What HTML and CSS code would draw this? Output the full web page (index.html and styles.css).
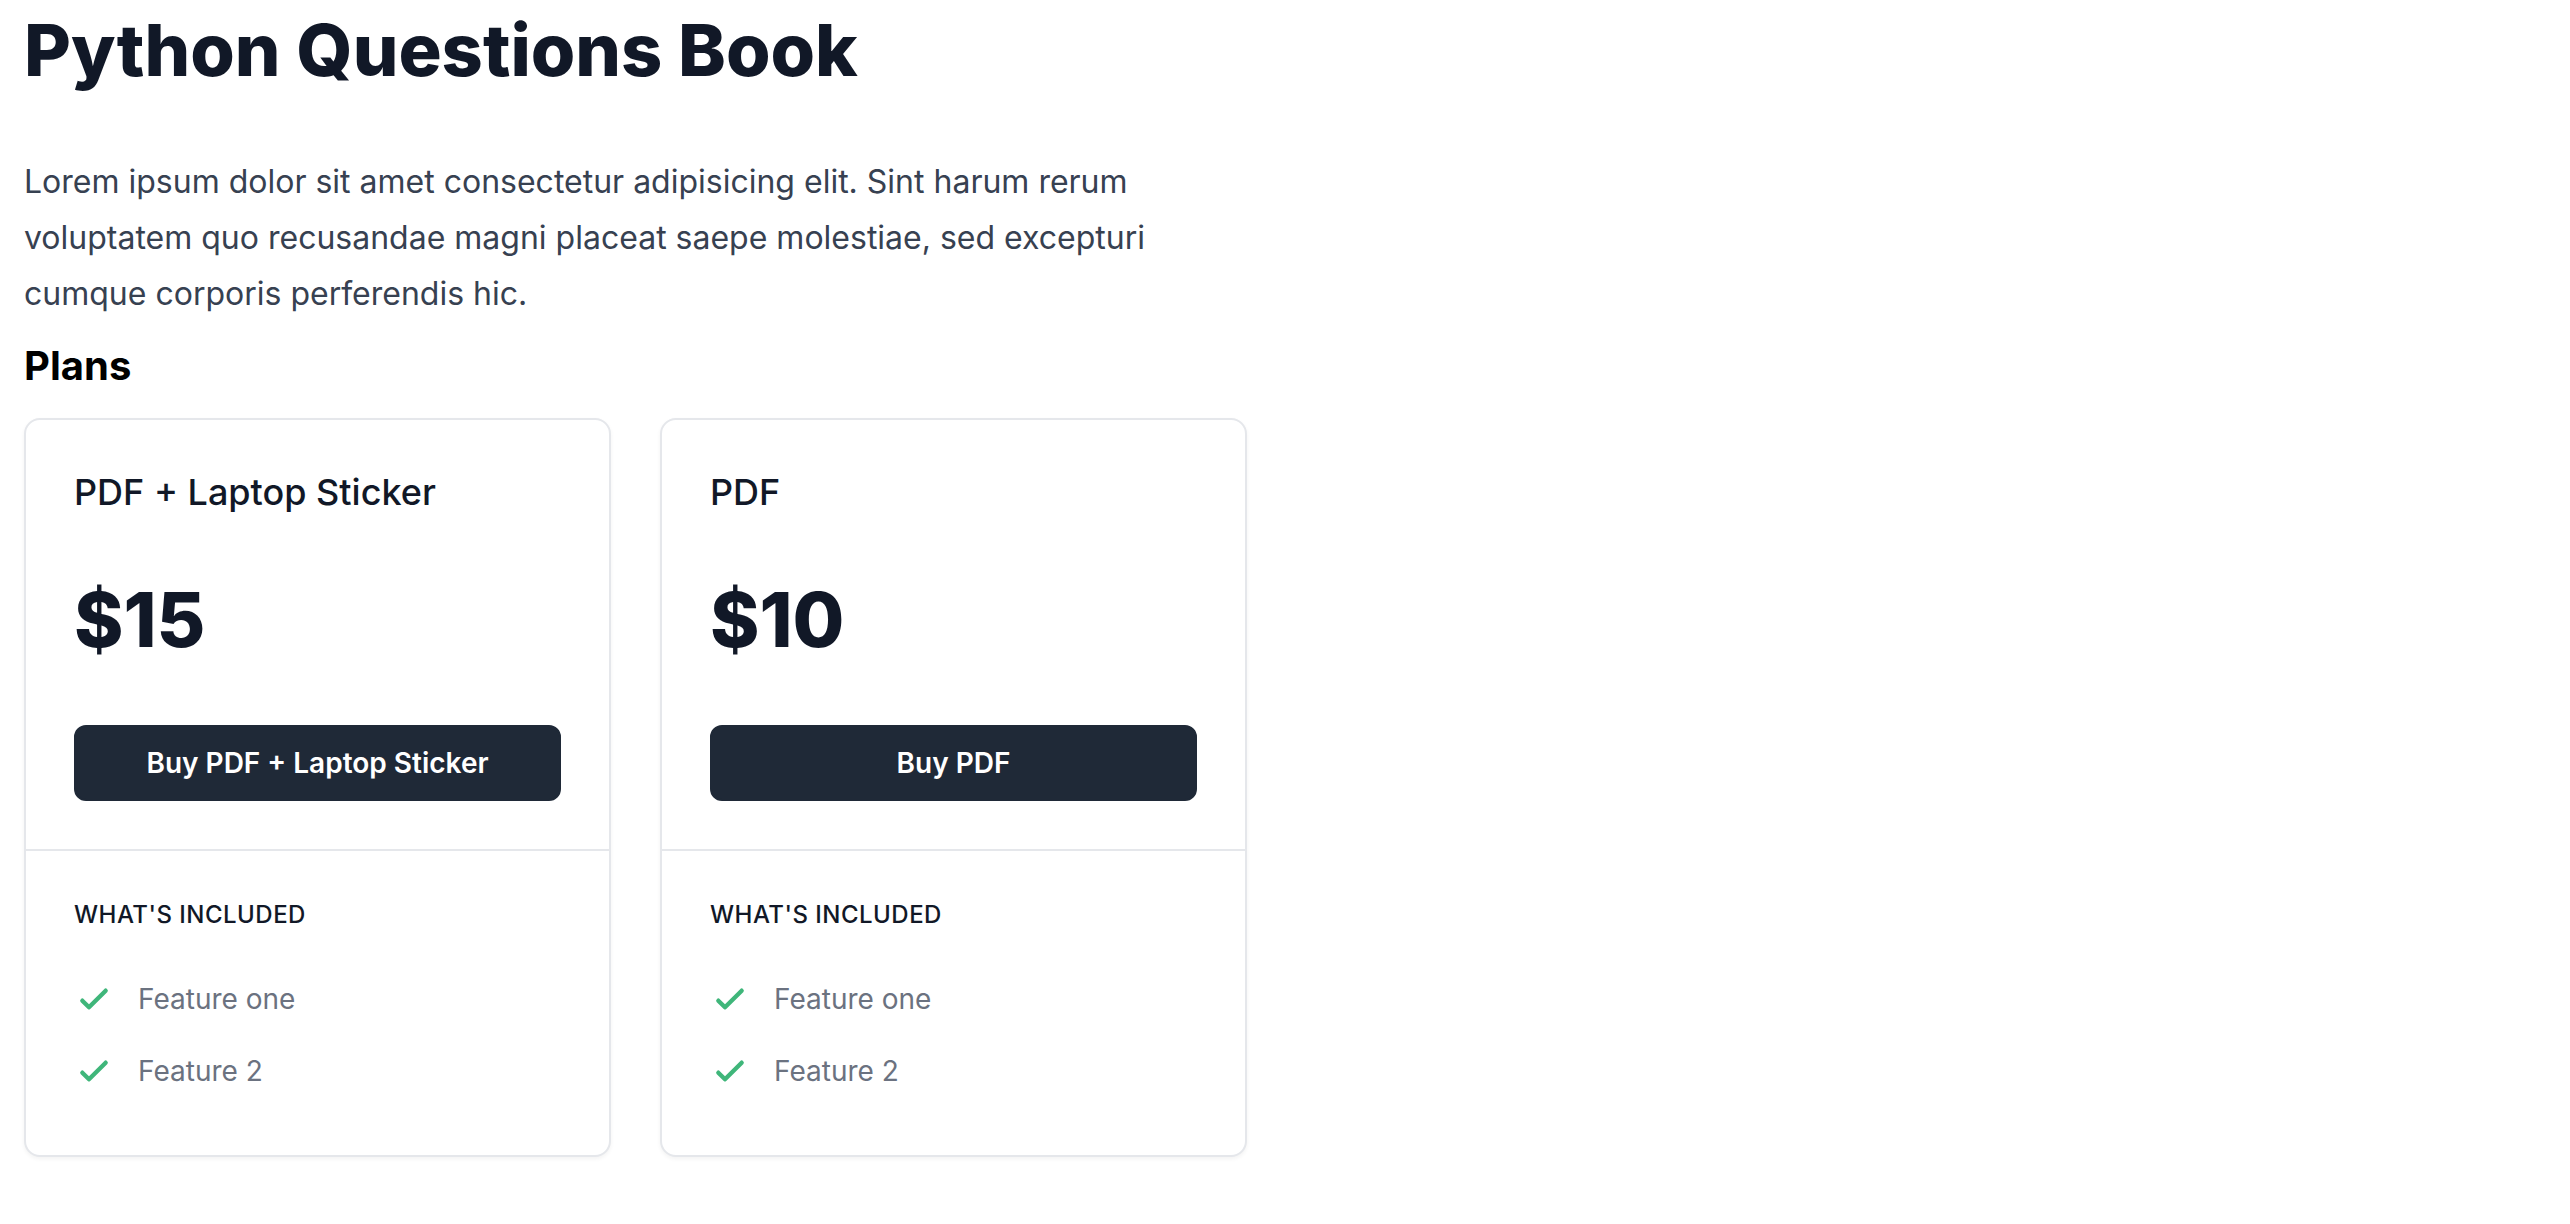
FILE: index.html
```html
<!DOCTYPE html>
<html lang="en">
<head>
<meta charset="utf-8">
<title>Python Questions Book</title>
<link rel="stylesheet" href="styles.css">
</head>
<body>
<main class="page">
  <h1 class="title">Python Questions Book</h1>
  <p class="intro">Lorem ipsum dolor sit amet consectetur adipisicing elit. Sint harum rerum voluptatem quo recusandae magni placeat saepe molestiae, sed excepturi cumque corporis perferendis hic.</p>
  <h2 class="plans-heading">Plans</h2>
  <div class="plans">
    <div class="card">
      <div class="card-top">
        <h3 class="plan-name">PDF + Laptop Sticker</h3>
        <p class="price"><span class="amount">$15</span></p>
        <a class="buy" href="#">Buy PDF + Laptop Sticker</a>
      </div>
      <div class="card-bottom">
        <h4 class="included">What's included</h4>
        <ul class="features">
          <li class="feature"><svg class="check" viewBox="0 0 24 24" fill="none" stroke="currentColor"><path stroke-linecap="round" stroke-linejoin="round" stroke-width="2.6" d="M5 13l4 4L19 7"/></svg><span>Feature one</span></li>
          <li class="feature"><svg class="check" viewBox="0 0 24 24" fill="none" stroke="currentColor"><path stroke-linecap="round" stroke-linejoin="round" stroke-width="2.6" d="M5 13l4 4L19 7"/></svg><span>Feature 2</span></li>
        </ul>
      </div>
    </div>
    <div class="card">
      <div class="card-top">
        <h3 class="plan-name">PDF</h3>
        <p class="price"><span class="amount">$10</span></p>
        <a class="buy" href="#">Buy PDF</a>
      </div>
      <div class="card-bottom">
        <h4 class="included">What's included</h4>
        <ul class="features">
          <li class="feature"><svg class="check" viewBox="0 0 24 24" fill="none" stroke="currentColor"><path stroke-linecap="round" stroke-linejoin="round" stroke-width="2.6" d="M5 13l4 4L19 7"/></svg><span>Feature one</span></li>
          <li class="feature"><svg class="check" viewBox="0 0 24 24" fill="none" stroke="currentColor"><path stroke-linecap="round" stroke-linejoin="round" stroke-width="2.6" d="M5 13l4 4L19 7"/></svg><span>Feature 2</span></li>
        </ul>
      </div>
    </div>
  </div>
</main>
</body>
</html>
```
FILE: styles.css
```css
* { box-sizing: border-box; }
html, body { margin: 0; padding: 0; background: #ffffff; }
body {
  font-family: "Inter", "Noto Sans", sans-serif;
  -webkit-font-smoothing: antialiased;
}
.page {
  padding: 10px 24px 40px 24px;
}
.title {
  margin: 0;
  font-size: 72px;
  line-height: 80px;
  font-weight: 800;
  color: #111827;
}
.intro {
  margin: 64px 0 0 0;
  max-width: 1200px;
  font-size: 32px;
  line-height: 56px;
  color: #374151;
}
.plans-heading {
  margin: 20px 0 0 0;
  font-size: 40px;
  line-height: 48px;
  font-weight: 700;
  color: #000000;
}
.plans {
  margin-top: 28px;
  display: grid;
  grid-template-columns: 587px 587px;
  column-gap: 49px;
  align-items: start;
}
.card {
  border: 2px solid #e5e7eb;
  border-radius: 16px;
  box-shadow: 0 2px 4px rgba(0, 0, 0, 0.05);
  background: #fff;
}
.card-top {
  padding: 48px;
  border-bottom: 2px solid #e5e7eb;
}
.plan-name {
  margin: 0;
  font-size: 36px;
  line-height: 48px;
  font-weight: 500;
  color: #111827;
}
.price {
  margin: 64px 0 0 0;
  line-height: 80px;
}
.amount {
  font-size: 75px;
  line-height: 80px;
  font-weight: 800;
  color: #111827;
}
.buy {
  display: block;
  margin-top: 44px;
  background: #1f2937;
  border: 2px solid #1f2937;
  border-radius: 12px;
  padding: 16px 0;
  font-size: 28px;
  line-height: 40px;
  font-weight: 600;
  color: #ffffff;
  text-align: center;
  text-decoration: none;
}
.card-bottom {
  padding: 48px 48px 64px 48px;
}
.included {
  margin: 0;
  font-size: 24px;
  line-height: 32px;
  font-weight: 500;
  letter-spacing: 0.02em;
  text-transform: uppercase;
  color: #111827;
}
.features {
  list-style: none;
  margin: 48px 0 0 0;
  padding: 0;
  display: flex;
  flex-direction: column;
  gap: 32px;
}
.feature {
  display: flex;
  align-items: flex-start;
  gap: 24px;
  font-size: 28px;
  line-height: 40px;
  color: #6b7280;
}
.check {
  flex-shrink: 0;
  width: 40px;
  height: 40px;
  color: #3fb67a;
}
```
